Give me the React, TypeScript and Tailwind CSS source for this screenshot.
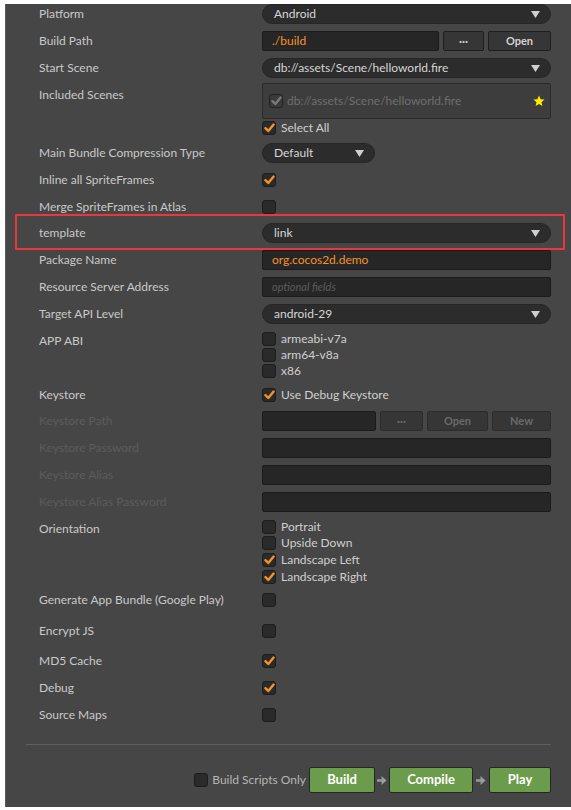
import type { ReactNode } from 'react';

const font = { fontFamily: 'Lato, "Open Sans", sans-serif' };

function Caret() {
  return (
    <svg width="9" height="7" viewBox="0 0 9 7" className="shrink-0">
      <polygon points="0,0 9,0 4.5,7" fill="#cfcfcf" />
    </svg>
  );
}

function Check({ checked, dim }: { checked?: boolean; dim?: boolean }) {
  return (
    <span
      className={`w-[14px] h-[14px] rounded-[3px] border border-[#1c1c1c] flex items-center justify-center shrink-0 ${
        dim ? 'bg-[#3a3a3a] border-[#222]' : 'bg-[#2a2a2a]'
      }`}
    >
      {checked && (
        <svg width="11" height="10" viewBox="0 0 11 10">
          <path
            d="M1.5 5.2 L4.3 8 L9.6 1.6"
            fill="none"
            stroke={dim ? '#7a7a7a' : '#f7922a'}
            strokeWidth="2.4"
            strokeLinecap="round"
            strokeLinejoin="round"
          />
        </svg>
      )}
    </span>
  );
}

function Select({ value, className = 'w-full' }: { value: string; className?: string }) {
  return (
    <div
      className={`h-[20px] rounded-full bg-[#2c2c2c] border border-[#262626] flex items-center justify-between pl-[11px] pr-[10px] text-[#d6d6d6] ${className}`}
    >
      <span>{value}</span>
      <Caret />
    </div>
  );
}

function Input({ value, placeholder, className = 'w-full' }: { value?: string; placeholder?: string; className?: string }) {
  return (
    <div
      className={`h-[20px] bg-[#262626] border border-[#1b1b1b] rounded-[2px] flex items-center px-[9px] ${className}`}
    >
      {value ? (
        <span className="text-[#f7922a]">{value}</span>
      ) : (
        <span className="text-[#5c5c5c] italic text-[11px]">{placeholder}</span>
      )}
    </div>
  );
}

function Btn({ children, w, disabled }: { children: ReactNode; w: string; disabled?: boolean }) {
  return (
    <div
      className={`h-[20px] ${w} rounded-[2px] border border-[#1e1e1e] bg-[#363636] flex items-center justify-center font-bold text-[11px] ${
        disabled ? 'text-[#6a6a6a] bg-[#3c3c3c] border-[#2c2c2c]' : 'text-[#d2d2d2]'
      }`}
    >
      {children}
    </div>
  );
}

function Row({
  label,
  children,
  mt,
  disabled,
  h = 'h-[20px]',
  top,
  labelPad = '',
}: {
  label?: string;
  children?: ReactNode;
  mt: string;
  disabled?: boolean;
  h?: string;
  top?: boolean;
  labelPad?: string;
}) {
  return (
    <div className={`flex ${top ? 'items-start' : 'items-center'} ${mt} ${h}`}>
      <div
        className={`w-[223px] shrink-0 leading-[20px] ${labelPad} ${disabled ? 'text-[#5c5c5c]' : 'text-[#c9c9c9]'}`}
      >
        {label}
      </div>
      <div className="flex-1 min-w-0">{children}</div>
    </div>
  );
}

function CheckLine({ label, checked, h = 'h-[16px]' }: { label: string; checked?: boolean; h?: string }) {
  return (
    <div className={`flex items-center gap-[5px] ${h} text-[#cfcfcf]`}>
      <Check checked={checked} />
      <span>{label}</span>
    </div>
  );
}

function Arrow() {
  return (
    <svg width="10" height="11" viewBox="0 0 11 11" className="shrink-0">
      <path d="M0 4 H5 V0.5 L10.5 5.5 L5 10.5 V7 H0 Z" fill="#9a9a9a" />
    </svg>
  );
}

function GreenBtn({ children, w }: { children: ReactNode; w: string }) {
  return (
    <div
      className={`h-[26px] ${w} rounded-[2px] border border-[#262626] bg-[#6b9c4c] text-white font-bold flex items-center justify-center text-[13px]`}
    >
      {children}
    </div>
  );
}

export default function App() {
  return (
    <div className="w-[571px] h-[810px] bg-white pt-[4px] pl-[5px] pb-[3px] overflow-hidden">
      <div
        className="h-full bg-[#464646] border-l border-[#5a5a5a] pl-[33px] pr-[20px] text-[12px] relative"
        style={font}
      >
        <Row label="Platform" mt="mt-0">
          <Select value="Android" />
        </Row>
        <Row label="Build Path" mt="mt-[7px]">
          <div className="flex gap-[4px]">
            <Input value="./build" className="flex-1" />
            <Btn w="w-[41px]">···</Btn>
            <Btn w="w-[63px]">Open</Btn>
          </div>
        </Row>
        <Row label="Start Scene" mt="mt-[7px]">
          <Select value="db://assets/Scene/helloworld.fire" />
        </Row>
        <Row label="Included Scenes" mt="mt-[5px]" h="h-[36px]" top labelPad="pt-[2px]">
          <div className="h-[36px] rounded-[2px] border border-[#2a2a2a] bg-[#3d3d3d] flex items-center pl-[6px] pr-[5px] gap-[4px]">
            <Check checked dim />
            <span className="text-[#6e6e6e] flex-1">db://assets/Scene/helloworld.fire</span>
            <svg width="12" height="12" viewBox="0 0 24 24">
              <polygon
                points="12,1 15.2,8.3 23,9 17,14.3 18.8,22 12,18 5.2,22 7,14.3 1,9 8.8,8.3"
                fill="#ffeb00"
              />
            </svg>
          </div>
        </Row>
        <Row mt="mt-[1px]" h="h-[16px]">
          <CheckLine label="Select All" checked />
        </Row>
        <Row label="Main Bundle Compression Type" mt="mt-[7px]">
          <Select value="Default" className="w-[113px]" />
        </Row>
        <Row label="Inline all SpriteFrames" mt="mt-[7px]">
          <Check checked />
        </Row>
        <Row label="Merge SpriteFrames in Atlas" mt="mt-[7px]">
          <Check />
        </Row>
        {/* highlighted row */}
        <div className="relative mt-[6px]">
          <Row label="template" mt="mt-0">
            <Select value="link" />
          </Row>
          <div className="absolute left-[-24px] right-[-14px] top-[-9px] h-[36px] border-2 border-[#e8383d] pointer-events-none" />
        </div>
        <Row label="Package Name" mt="mt-[7px]">
          <Input value="org.cocos2d.demo" />
        </Row>
        <Row label="Resource Server Address" mt="mt-[7px]">
          <Input placeholder="optional fields" />
        </Row>
        <Row label="Target API Level" mt="mt-[7px]">
          <Select value="android-29" />
        </Row>
        <Row label="APP ABI" mt="mt-[7px]" h="h-[48px]" top>
          <CheckLine label="armeabi-v7a" />
          <CheckLine label="arm64-v8a" />
          <CheckLine label="x86" />
        </Row>
        <Row label="Keystore" mt="mt-[6px]">
          <CheckLine label="Use Debug Keystore" checked h="h-[20px]" />
        </Row>
        <Row label="Keystore Path" mt="mt-[6px]" disabled>
          <div className="flex gap-[4px]">
            <Input className="flex-1" />
            <Btn w="w-[43px]" disabled>
              ···
            </Btn>
            <Btn w="w-[61px]" disabled>
              Open
            </Btn>
            <Btn w="w-[59px]" disabled>
              New
            </Btn>
          </div>
        </Row>
        <Row label="Keystore Password" mt="mt-[7px]" disabled>
          <Input />
        </Row>
        <Row label="Keystore Alias" mt="mt-[7px]" disabled>
          <Input />
        </Row>
        <Row label="Keystore Alias Password" mt="mt-[7px]" disabled>
          <Input />
        </Row>
        <Row label="Orientation" mt="mt-[6px]" h="h-[67px]" top labelPad="pt-[1px]">
          <CheckLine label="Portrait" h="h-[17px]" />
          <CheckLine label="Upside Down" h="h-[16px]" />
          <CheckLine label="Landscape Left" checked h="h-[17px]" />
          <CheckLine label="Landscape Right" checked h="h-[17px]" />
        </Row>
        <Row label="Generate App Bundle (Google Play)" mt="mt-[5px]">
          <Check />
        </Row>
        <Row label="Encrypt JS" mt="mt-[11px]">
          <Check />
        </Row>
        <Row label="MD5 Cache" mt="mt-[10px]">
          <Check checked />
        </Row>
        <Row label="Debug" mt="mt-[7px]">
          <Check checked />
        </Row>
        <Row label="Source Maps" mt="mt-[7px]">
          <Check />
        </Row>
        <div className="mt-[19px] ml-[-13px] h-px bg-[#5f5f5f]" />
        <div className="mt-[22px] flex items-center justify-end">
          <div className="flex items-center gap-[4px] text-[#b5b5b5] mr-[3px]">
            <Check />
            <span>Build Scripts Only</span>
          </div>
          <GreenBtn w="w-[66px]">Build</GreenBtn>
          <span className="mx-[2px] flex">
            <Arrow />
          </span>
          <GreenBtn w="w-[84px]">Compile</GreenBtn>
          <span className="mx-[3px] flex">
            <Arrow />
          </span>
          <GreenBtn w="w-[62px]">Play</GreenBtn>
        </div>
      </div>
    </div>
  );
}
